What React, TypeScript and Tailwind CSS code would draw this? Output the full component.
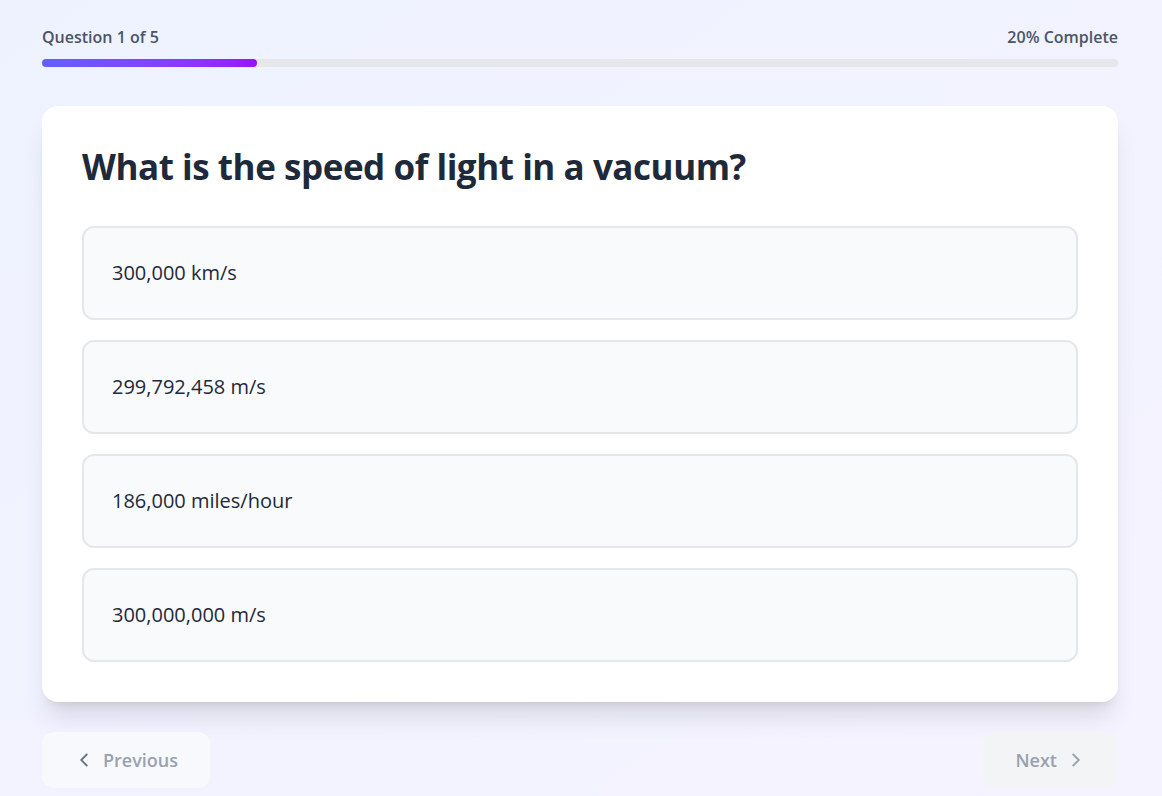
import { ChevronLeft, ChevronRight } from "lucide-react";

const options = ["300,000 km/s", "299,792,458 m/s", "186,000 miles/hour", "300,000,000 m/s"];

export default function App() {
  return (
    <div
      className="min-h-[796px] bg-gradient-to-br from-[#eef2ff] to-[#f5f3ff] pt-[25px]"
      style={{ fontFamily: '"Open Sans", "Noto Sans", sans-serif' }}
    >
      <div className="mx-auto w-[1076px] -translate-x-px">
        {/* progress */}
        <div className="mb-[39px]">
          <div className="mb-[10px] flex items-center justify-between text-base leading-6 font-semibold text-gray-600">
            <span>Question 1 of 5</span>
            <span>20% Complete</span>
          </div>
          <div className="h-2 w-full rounded-full bg-gray-200">
            <div className="h-2 w-[20%] rounded-full bg-gradient-to-r from-indigo-500 to-purple-600" />
          </div>
        </div>

        {/* card */}
        <div className="rounded-2xl bg-white p-10 shadow-xl">
          <h2 className="mb-[39px] pt-px text-[35px] leading-10 font-bold tracking-[-0.45px] text-gray-800">
            What is the speed of light in a vacuum?
          </h2>
          <div className="flex flex-col gap-5">
            {options.map((o) => (
              <button
                key={o}
                className="w-full rounded-xl border-2 border-gray-200 bg-gray-50 px-7 py-[31px] text-left text-xl leading-7 text-gray-800"
              >
                {o}
              </button>
            ))}
          </div>
        </div>

        {/* nav */}
        <div className="mt-[30px] flex items-center justify-between">
          <button className="flex items-center gap-2 rounded-xl bg-[#f8f9fc] py-3.5 pr-8 pl-[31px] text-lg leading-7 font-semibold text-gray-400">
            <ChevronLeft size={22} className="text-gray-500" />
            Previous
          </button>
          <button className="flex items-center gap-2 rounded-xl bg-gray-100 py-3.5 pr-[31px] pl-8 text-lg leading-7 font-semibold text-gray-400">
            Next
            <ChevronRight size={22} />
          </button>
        </div>
      </div>
    </div>
  );
}
